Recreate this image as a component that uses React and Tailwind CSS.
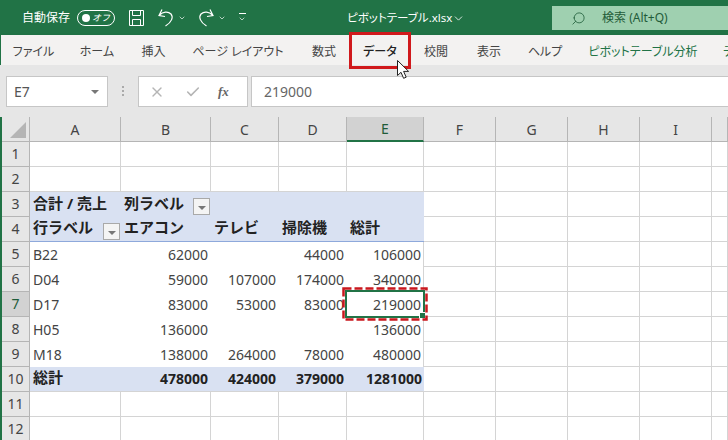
import React from 'react';
import { ChevronDown, Search, X, Check } from 'lucide-react';

const font = "[font-family:'Noto_Sans','Noto_Sans_CJK_JP',sans-serif]";

const columns = [
  { label: 'A', w: 'w-[91px]' },
  { label: 'B', w: 'w-[90px]' },
  { label: 'C', w: 'w-[68px]' },
  { label: 'D', w: 'w-[68px]' },
  { label: 'E', w: 'w-[77px]' },
  { label: 'F', w: 'w-[72px]' },
  { label: 'G', w: 'w-[72px]' },
  { label: 'H', w: 'w-[72px]' },
  { label: 'I', w: 'w-[72px]' },
  { label: '', w: 'w-[16px]' },
];

// row number, then the cells for A..E
const rows = [
  [1], [2],
  [3, '合計 / 売上', '列ラベル'],
  [4, '行ラベル', 'エアコン', 'テレビ', '掃除機', '総計'],
  [5, 'B22', '62000', '', '44000', '106000'],
  [6, 'D04', '59000', '107000', '174000', '340000'],
  [7, 'D17', '83000', '53000', '83000', '219000'],
  [8, 'H05', '136000', '', '', '136000'],
  [9, 'M18', '138000', '264000', '78000', '480000'],
  [10, '総計', '478000', '424000', '379000', '1281000'],
  [11], [12],
];

const tabs = [
  ['ファイル', 'w-[65px]', 'text-[#444]'],
  ['ホーム', 'w-[62px]', 'text-[#444]'],
  ['挿入', 'w-[51px]', 'text-[#444]'],
  ['ページ レイアウト', 'w-[118px]', 'text-[#444]'],
  ['数式', 'w-[54px]', 'text-[#444]'],
  ['データ', 'w-[58px]', 'font-medium text-[#222]'],
  ['校閲', 'w-[54px]', 'text-[#444]'],
  ['表示', 'w-[52px]', 'text-[#444]'],
  ['ヘルプ', 'w-[60px]', 'text-[#444]'],
  ['ピボットテーブル分析', 'w-[136px]', 'text-[#217346]'],
];

const cellStyle = (row, col) => {
  if (col > 4 || row <= 2 || row >= 11) return 'border-b border-r border-[#d4d4d4]';
  if (row === 3) return 'bg-[#d9e1f2]';
  if (row === 4) return 'border-b border-[#8ea9db] bg-[#d9e1f2]';
  if (row === 10) return 'border-b border-[#d4d4d4] bg-[#d9e1f2]';
  return col === 4 ? 'border-r border-[#d4d4d4]' : '';
};

const FilterButton = ({ className }) => (
  <span className={`absolute flex h-[17px] w-[17px] items-center justify-center border border-[#a9a9a9] bg-[#f4f4f4] ${className}`}>
    <span className="mt-[2px] h-0 w-0 border-x-[4px] border-t-[4px] border-x-transparent border-t-[#777]" />
  </span>
);

const Cell = ({ row, col, value, w }) => {
  const isHead = (row === 3 || row === 4 || row === 10) && col <= 4;
  const left = col === 0 || row === 3 || row === 4;
  const isLabel = row === 3 || row === 4 || (row === 10 && col === 0);
  const rightPad = col === 4 ? 'pr-[2px]' : 'pr-[3px]';
  return (
    <div className={`relative flex h-[25px] shrink-0 items-center whitespace-nowrap ${isLabel ? 'pb-[3px] text-[15px]' : 'pb-[1px] text-[14px]'} ${w} ${cellStyle(row, col)} ${left ? 'justify-start pl-[3px]' : `justify-end ${rightPad}`} ${isHead ? 'font-bold text-[#222]' : 'text-[#444]'}`}>
      {value}
      {row === 3 && col === 1 && <FilterButton className="left-[72px] top-[6px]" />}
      {row === 4 && col === 0 && <FilterButton className="right-[1px] top-[6px]" />}
    </div>
  );
};

export default function App() {
  return (
    <div className={`relative h-[440px] w-[728px] overflow-hidden bg-white ${font}`}>
      {/* title bar */}
      <div className="flex h-[35px] items-center overflow-hidden whitespace-nowrap bg-[#217346] text-white">
        <span className="ml-[22px] text-[12px]">自動保存</span>
        <span className="ml-[7px] flex h-[16px] w-[38px] shrink-0 items-center justify-between rounded-full border border-white pl-[4px] pr-[4px]">
          <span className="h-[8px] w-[8px] rounded-full bg-white" />
          <span className="text-[9px] italic">オフ</span>
        </span>
        <svg className="ml-[13px] shrink-0" width="17" height="18" viewBox="0 0 17 18" fill="none" stroke="white" strokeWidth="1">
          <path d="M1.5 1.5h14v15h-14zM4.5 1.5v5h8v-5M4.5 16.5v-6h8v6" />
        </svg>
        <svg className="ml-[12px] shrink-0" width="18" height="19" viewBox="0 0 18 19" fill="none" stroke="white" strokeWidth="1.2">
          <path d="M5 1.5 2 7.5l6 1M2.5 7C6 3.5 11 3 14 6c2.5 3 1 8-5.5 12" />
        </svg>
        <ChevronDown className="ml-[3px] shrink-0" size={8} strokeWidth={2} />
        <svg className="ml-[11px] shrink-0" width="18" height="19" viewBox="0 0 18 19" fill="none" stroke="white" strokeWidth="1.2">
          <path d="M13 1.5l3 6-6 1M15.5 7C12 3.5 7 3 4 6c-2.5 3-1 8 5.5 12" />
        </svg>
        <ChevronDown className="ml-[3px] shrink-0" size={8} strokeWidth={2} />
        <span className="ml-[12px] flex shrink-0 flex-col items-center">
          <span className="mb-[1px] h-px w-[7px] bg-white" />
          <ChevronDown size={8} strokeWidth={2} />
        </span>
        <span className="ml-[101px] flex w-[116px] shrink-0 items-center justify-between pt-[1px] text-[11.5px] [font-feature-settings:'palt']">
          ピボットテーブル.xlsx
          <ChevronDown className="shrink-0" size={13} strokeWidth={1.5} />
        </span>
        <div className="ml-[89px] mt-[1px] flex h-[24px] w-[200px] shrink-0 items-center bg-[#9fd0b0] text-[#1f5c39]">
          <Search className="ml-[19px] -scale-x-100" size={15} strokeWidth={1.3} />
          <span className="ml-[16px] text-[12px]">検索 (Alt+Q)</span>
        </div>
      </div>

      {/* ribbon tabs */}
      <div className="flex h-[30px] items-center overflow-hidden whitespace-nowrap border-l border-[#217346] bg-[#f3f2f1] pt-[3px] text-[12px] shadow-[0_3px_5px_rgba(0,0,0,0.16)] [font-feature-settings:'palt']">
        {tabs.map(([t, w, color]) => (
          <span key={t} className={`flex shrink-0 justify-center ${w} ${color}`}>{t}</span>
        ))}
        <span className="ml-[12px] shrink-0 text-[#217346]">デ</span>
      </div>

      {/* formula bar */}
      <div className="flex h-[52px] items-start bg-[#e6e6e6] pl-[6px] pt-[11px]">
        <div className="flex h-[31px] w-[102px] items-center justify-between border border-[#c6c6c6] bg-white pl-[7px] pr-[8px] text-[14px] text-[#555]">
          E7
          <span className="h-0 w-0 border-x-[4px] border-t-[4px] border-x-transparent border-t-[#777]" />
        </div>
        <span className="ml-[14px] mt-[10px] flex flex-col gap-[2px]">
          <span className="h-[2px] w-[2px] bg-[#aaa]" />
          <span className="h-[2px] w-[2px] bg-[#aaa]" />
          <span className="h-[2px] w-[2px] bg-[#aaa]" />
        </span>
        <div className="ml-[14px] flex h-[31px] w-[110px] items-center border border-[#c6c6c6] bg-white">
          <X className="ml-[10px] text-[#b5b5b5]" size={16} strokeWidth={2} />
          <Check className="ml-[20px] text-[#b5b5b5]" size={16} strokeWidth={2.4} />
          <span className="ml-[17px] font-['Liberation_Serif'] text-[13px] font-bold italic text-[#666]">fx</span>
        </div>
        <div className="ml-[3px] flex h-[31px] flex-1 items-center border border-r-0 border-[#c6c6c6] bg-white pl-[12px] text-[14px] text-[#666]">
          219000
        </div>
      </div>

      {/* sheet */}
      <div className="border-l-2 border-[#217346]">
        <div className="flex h-[25px] bg-[#e6e6e6]">
          <div className="relative w-[28px] shrink-0 border-b border-r border-[#b5b5b5]">
            <span className="absolute bottom-[3px] right-[3px] h-0 w-0 border-b-[16px] border-l-[16px] border-b-[#b5b5b5] border-l-transparent" />
          </div>
          {columns.map((c) => (
            <div
              key={c.label}
              className={`flex shrink-0 items-center justify-center border-r border-[#b5b5b5] text-[14px] ${c.w} ${c.label === 'E' ? 'border-b-2 border-b-[#217346] bg-[#d2d2d2] text-[#1f5c39]' : 'border-b text-[#444]'}`}
            >
              {c.label}
            </div>
          ))}
        </div>
        {rows.map(([n, ...cells]) => (
          <div key={n} className="flex">
            <div className={`flex h-[25px] w-[28px] shrink-0 items-center justify-center border-b border-r border-[#b5b5b5] pb-[1px] text-[14px] ${n === 7 ? 'bg-[#d2d2d2] text-[#1f5c39]' : 'bg-[#e6e6e6] text-[#444]'}`}>
              {n}
            </div>
            {columns.map((c, i) => (
              <Cell key={c.label} row={n} col={i} value={cells[i]} w={c.w} />
            ))}
          </div>
        ))}
      </div>

      {/* selected cell + marching ants */}
      <div className="absolute left-[345px] top-[290px] h-[28px] w-[80px] border-2 border-[#217346]">
        <span className="absolute -bottom-[3px] -right-[3px] h-[7px] w-[7px] border border-white bg-[#217346]" />
      </div>
      <svg className="absolute left-[342px] top-[287px]" width="86" height="34" fill="none">
        <rect x="1.5" y="1.5" width="83" height="31" stroke="#c9181e" strokeWidth="2.5" strokeDasharray="8 3" />
      </svg>

      {/* tab highlight */}
      <div className="absolute left-[349px] top-[32px] h-[37px] w-[62px] border-[3px] border-[#d0191c]" />

      {/* mouse pointer */}
      <svg className="absolute left-[396px] top-[59px]" width="15" height="21" viewBox="0 0 15 21">
        <path d="M1.5 1.5v15l3.5-3.2 2.6 6 2.6-1.1-2.6-5.8h5z" fill="white" stroke="#222" strokeWidth="1" />
      </svg>
    </div>
  );
}
